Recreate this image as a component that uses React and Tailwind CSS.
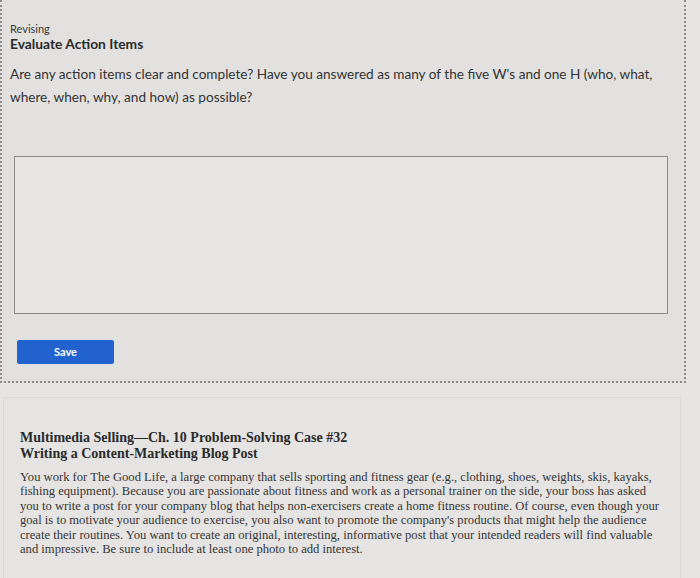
export default function App() {
    return (
        <div className="w-[700px] h-[578px] overflow-hidden bg-[#e6e5e3] text-[#2e2e2e]">
            <div className="w-[686px] h-[383px] border-r-2 border-b-2 border-l-2 border-dotted border-[#8d8d8f] bg-[#e2e1df] px-[8px] pt-[22px] font-['Lato',sans-serif]">
                <div className="text-[11px] leading-[14px] text-[#3a3a3a]">Revising</div>
                <div className="text-[13.8px] leading-[16px] font-bold text-[#2a2a2a]">Evaluate Action Items</div>

                <p className="mt-[11px] text-[13.6px] leading-[23px] text-[#333]">
                    Are any action items clear and complete? Have you answered as many of the five W's and one H (who, what,
                    <br />
                    where, when, why, and how) as possible?
                </p>

                <div className="mt-[47px] ml-[4px] w-[654px] h-[158px] border border-[#8a8a8a] bg-[#e8e7e5]" />

                <button className="mt-[26px] ml-[7px] w-[97px] h-[24px] rounded-[2px] bg-[#2262cf] text-white text-[11px] font-bold">
                    Save
                </button>
            </div>

            <div className="mt-[14px] ml-[3px] w-[678px] h-[190px] border border-[#dcdbd9] bg-[#e5e4e2] px-[16px] pt-[32px] font-['Liberation_Serif',serif]">
                <div className="text-[14px] leading-[16px] font-bold text-[#2b2b2b]">
                    Multimedia Selling—Ch. 10 Problem-Solving Case #32
                    <br />
                    Writing a Content-Marketing Blog Post
                </div>
                <p className="mt-[8px] text-[12.6px] leading-[14.4px] text-[#353535]">
                    You work for The Good Life, a large company that sells sporting and fitness gear (e.g., clothing, shoes, weights, skis, kayaks,
                    <br />
                    fishing equipment). Because you are passionate about fitness and work as a personal trainer on the side, your boss has asked
                    <br />
                    you to write a post for your company blog that helps non-exercisers create a home fitness routine. Of course, even though your
                    <br />
                    goal is to motivate your audience to exercise, you also want to promote the company's products that might help the audience
                    <br />
                    create their routines. You want to create an original, interesting, informative post that your intended readers will find valuable
                    <br />
                    and impressive. Be sure to include at least one photo to add interest.
                </p>
            </div>
        </div>
    );
}
